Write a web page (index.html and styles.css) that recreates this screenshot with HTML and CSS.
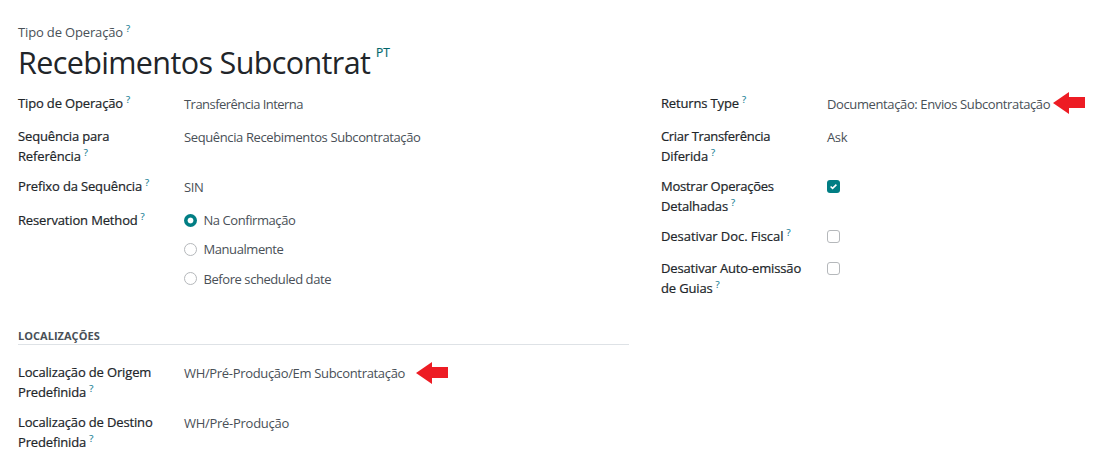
FILE: index.html
```html
<!DOCTYPE html>
<html lang="pt">
<head>
<meta charset="utf-8">
<title>Tipo de Operação</title>
<link rel="stylesheet" href="styles.css">
</head>
<body>
<main class="sheet">
  <header class="title">
    <div class="caption">Tipo de Operação<sup>?</sup></div>
    <div class="heading"><h1>Recebimentos Subcontrat</h1><span class="lang">PT</span></div>
  </header>
  <div class="columns">
    <section class="group left">
      <div class="label">Tipo de Operação<sup>?</sup></div>
      <div class="value tight">Transferência Interna</div>
      <div class="label">Sequência para<br>Referência<sup>?</sup></div>
      <div class="value">Sequência Recebimentos Subcontratação</div>
      <div class="label">Prefixo da Sequência<sup>?</sup></div>
      <div class="value">SIN</div>
      <div class="label">Reservation Method<sup>?</sup></div>
      <div class="radios">
        <div class="option"><span class="radio on"></span>Na Confirmação</div>
        <div class="option"><span class="radio"></span>Manualmente</div>
        <div class="option"><span class="radio"></span>Before scheduled date</div>
      </div>
    </section>
    <section class="group right">
      <div class="label">Returns Type<sup>?</sup></div>
      <div class="value marked near"><span>Documentação: Envios Subcontratação</span><svg class="arrow" width="32" height="22" viewBox="0 0 32 22"><path d="M0 11L16 0V5H32V16H16V22Z"/></svg></div>
      <div class="label"><span class="snug">Criar Transferência</span><br>Diferida<sup>?</sup></div>
      <div class="value">Ask</div>
      <div class="label"><span class="snug-slight">Mostrar Operações</span><br>Detalhadas<sup>?</sup></div>
      <div class="box on"><svg width="13" height="13" viewBox="0 0 13 13"><path d="M3.6 6.5L5.6 8.3L9.4 4.7"/></svg></div>
      <div class="label loose">Desativar Doc. Fiscal<sup>?</sup></div>
      <div class="box"></div>
      <div class="label">Desativar Auto-emissão<br>de Guias<sup>?</sup></div>
      <div class="box"></div>
    </section>
  </div>
  <section class="locations">
    <h2>LOCALIZAÇÕES</h2>
    <div class="group places">
      <div class="label">Localização de Origem<br>Predefinida<sup>?</sup></div>
      <div class="value marked"><span>WH/Pré-Produção/Em Subcontratação</span><svg class="arrow" width="32" height="22" viewBox="0 0 32 22"><path d="M0 11L16 0V5H32V16H16V22Z"/></svg></div>
      <div class="label">Localização de Destino<br>Predefinida<sup>?</sup></div>
      <div class="value wide">WH/Pré-Produção</div>
    </div>
  </section>
</main>
</body>
</html>
```
FILE: styles.css
```css
* { box-sizing: border-box; }
body {
  margin: 0;
  background: #fff;
  color: #212529;
  font: 400 13px/20px "Segoe UI", "Open Sans", "Noto Sans", sans-serif;
  overflow: hidden;
}
.sheet { height: 469px; padding: 22px 18px 0; white-space: nowrap; }
.title { height: 71px; }
.caption { color: #495057; letter-spacing: -0.15px; }
sup {
  margin-left: 3px;
  color: #1c7f96;
  font-size: 9.5px;
  font-weight: 400;
  line-height: 0;
  vertical-align: 5px;
  letter-spacing: 0;
  -webkit-text-stroke: 0.15px #1c7f96;
}
.heading { display: flex; align-items: flex-start; gap: 6px; }
h1 { margin: 0; font-size: 30.5px; line-height: 41px; font-weight: 400; width: 352px; letter-spacing: -0.63px; }
.lang { color: #01666b; font-size: 12px; line-height: 22px; letter-spacing: 0.1px; -webkit-text-stroke: 0.15px #01666b; }
.columns { display: grid; grid-template-columns: 643px 1fr; }
.group { display: grid; grid-template-columns: 166px 1fr; align-items: start; }
.left { grid-template-rows: 33px 50px 34px 100px; }
.right { grid-template-rows: 33px 50px 50px 32px 52px; }
.places { grid-template-rows: 50px 50px; }
.label { letter-spacing: -0.15px; -webkit-text-stroke: 0.2px #212529; }
.snug { letter-spacing: -0.34px; }
.snug-slight { letter-spacing: -0.25px; }
.loose { letter-spacing: -0.06px; }
.value { color: #495057; padding-top: 1px; letter-spacing: -0.38px; }
.tight { letter-spacing: -0.54px; }
.wide { letter-spacing: -0.28px; }
.marked { display: flex; align-items: flex-start; gap: 11px; letter-spacing: -0.33px; }
.near { gap: 3px; letter-spacing: -0.38px; }
.arrow { flex: none; margin-top: -2px; fill: #ed1c24; }
.places .arrow { margin-top: -1px; }
.radios { display: grid; gap: 9.4px; color: #495057; letter-spacing: -0.43px; }
.option { display: flex; align-items: center; gap: 6.5px; }
.radio { width: 13px; height: 13px; border: 1px solid #b5b8bb; border-radius: 50%; }
.radio.on { border: 0; background: radial-gradient(circle, #fff 2.5px, #017e84 3.3px); }
.box { width: 13px; height: 13px; margin-top: 4px; border: 1px solid #b5b8bb; border-radius: 3px; }
.box.on { border: 0; background: #017e84; }
.box svg { display: block; fill: none; stroke: #fff; stroke-width: 1.6; }
.locations { width: 611px; padding-top: 16px; }
h2 { margin: 0 0 17px; height: 19px; border-bottom: 1px solid #dee2e6; color: #495057; font-size: 11px; line-height: 20px; font-weight: 700; letter-spacing: 0.03px; }
```
